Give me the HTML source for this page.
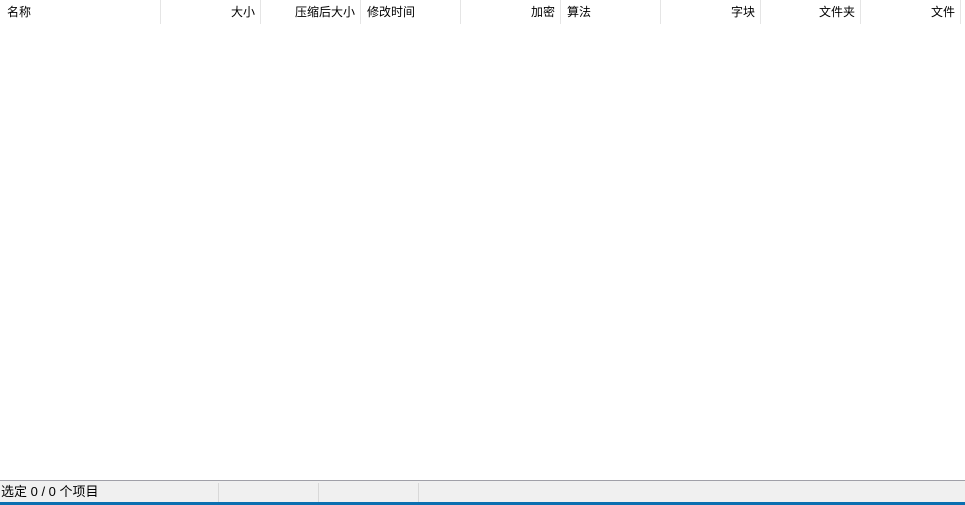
<!DOCTYPE html>
<html><head><meta charset="utf-8"><style>
html,body{margin:0;padding:0;width:965px;height:505px;overflow:hidden;background:#fff;
font-family:"Liberation Sans","Noto Sans CJK SC",sans-serif;font-size:12px;color:#000;position:relative}
.h{position:absolute;top:0;height:24px;line-height:24px;box-sizing:border-box;border-right:1px solid #e5e5e5;white-space:nowrap}
.h.r{text-align:right;padding-right:5px}
.h.l{padding-left:7px}
#sb{position:absolute;left:0;top:480px;width:965px;height:23px;background:#f0f0f0;border-top:1px solid #a0a0a8;box-sizing:border-box}
#blue{position:absolute;left:0;top:502px;width:965px;height:3px;background:#0a6fb0}
.sep{position:absolute;top:2px;height:20px;width:1px;background:#d8d8d8}
</style></head><body>
<div class="h l" style="left:0;width:161px;padding-left:7px">名称</div>
<div class="h r" style="left:161px;width:100px">大小</div>
<div class="h r" style="left:261px;width:100px">压缩后大小</div>
<div class="h l" style="left:361px;width:100px;padding-left:6px">修改时间</div>
<div class="h r" style="left:461px;width:100px">加密</div>
<div class="h l" style="left:561px;width:100px;padding-left:6px">算法</div>
<div class="h r" style="left:661px;width:100px">字块</div>
<div class="h r" style="left:761px;width:100px">文件夹</div>
<div class="h r" style="left:861px;width:100px">文件</div>
<div id="sb">
<span style="position:absolute;left:1px;top:0;line-height:22px;font-size:13px">选定 0 / 0 个项目</span>
<div class="sep" style="left:218px"></div>
<div class="sep" style="left:318px"></div>
<div class="sep" style="left:418px"></div>
</div>
<div id="blue"></div>
</body></html>
